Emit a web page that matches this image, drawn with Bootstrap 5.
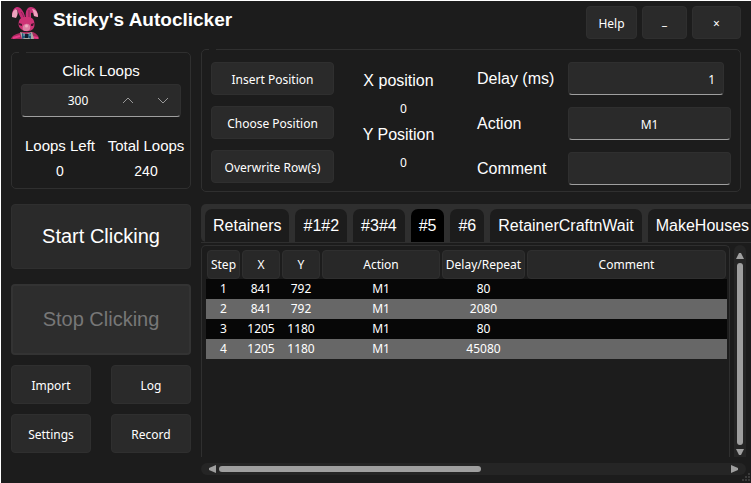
<!DOCTYPE html>
<html lang="en" data-bs-theme="dark">
<head>
<meta charset="utf-8">
<meta name="viewport" content="width=device-width, initial-scale=1">
<title>Sticky's Autoclicker</title>
<link href="https://cdn.jsdelivr.net/npm/bootstrap@5.3.0/dist/css/bootstrap.min.css" rel="stylesheet">
<style>
:root{--bg:#1c1c1c;--ctl:#2a2a2a;--line:#2f2f2f;--thumb:#9f9f9f}
body{background:var(--bg);color:#fff;font-family:"Liberation Sans",Arial,sans-serif;font-size:16px;line-height:20px;overflow:hidden}
.shell{border-top:1px solid #fff;border-left:1px solid #fff}
.topbar{height:48px;padding:5px 10px 0 10px}
.topbar h1{font-size:19px;line-height:28px;font-weight:700;padding-left:10px}
.window-btns{gap:5px}
.help{width:51px}.mini{width:45px}.shut{width:49px}
.workspace{display:grid;grid-template-columns:180px minmax(0,1fr);column-gap:10px;padding-left:10px}
.ctl,.ctl:hover,.ctl:disabled{background:var(--ctl);border:1px solid var(--line);border-radius:4px;color:#fff;font-family:"Noto Sans","Open Sans",sans-serif;font-size:12px;line-height:19px;padding:7px 4px 5px;min-width:0;height:33px}
.ctl.mini{font-weight:700;padding:4px 4px 8px}
.field,.field:hover{border-bottom-color:var(--thumb);box-shadow:none;outline:0}
.field-select{appearance:none;text-align:center;text-align-last:center}
.frame{position:relative;border:1px solid var(--line);border-radius:5px}
.frame::before{content:"";position:absolute;top:-1px;left:7px;width:7px;height:1px;background:var(--bg)}
.loops{margin-top:3px;padding:8px 9px 7px;font-size:15px}
.loops .num{font-size:14px;padding-top:5px}
.ctl.spin{display:flex;align-items:center;padding:0;margin-top:3px}
.spin input{flex:1 1 0;min-width:0;background:none;border:0;outline:0;color:#fff;text-align:center;padding:0 0 0 24px}
.spin button{background:none;border:0;width:35px;padding:0;line-height:1}
.loop-totals{padding-top:19px;margin-right:-6px}
.left-total{width:78px}.all-total{padding-left:6px;flex-grow:1}
.left-col{display:flex;flex-direction:column}
.ctl.big{font-family:"Liberation Sans",Arial,sans-serif;font-size:20px;margin-top:15px;padding:6px}
.ctl.go{height:65px}
.ctl.halt{height:71px;background:#2d2d2d;border:2px solid #333;color:#777}
.small-btns{display:grid;grid-template-columns:1fr 1fr;gap:10px 20px;margin-top:10px}
.small-btns .ctl{height:39px}
.editor{display:grid;grid-template-columns:123px 1fr 254px;margin-right:10px;padding:12px 9px 6px}
.stack{display:grid;grid-auto-rows:33px;row-gap:11px}
.coords{text-align:center;padding:8px 14px 0 0}
.coords .val{font-family:"Noto Sans","Open Sans",sans-serif;font-size:12px;line-height:16px;padding:9px 0 7px 10px}
.coords .cap{line-height:22px}
.form-rows{row-gap:12px}
.form-rows .line{display:grid;grid-template-columns:91px 1fr;align-items:center}
.form-rows .delay-in{margin-right:7px;text-align:right;padding-right:8px}
.tabs{background:var(--line);border-radius:5px 0 0 5px;height:38px;margin-top:12px;padding:5px 0 0 4px;gap:6px;overflow:hidden}
.tabs button{flex:none;background:var(--bg);border:0;border-radius:7px 7px 0 0;color:#fff;padding:0 8px;height:33px;line-height:32px}
.tabs button.on{background:#000}
.under{border-bottom:1px solid var(--line);margin-bottom:2px}
.grid-box{flex:1 1 0;min-width:0;border:1px solid var(--line);border-bottom:0;border-radius:5px 5px 0 0;padding:4px 2px 0 4px;height:212px;margin-right:4px}
.steps{width:100%;table-layout:fixed;border-collapse:collapse;font-family:"Noto Sans","Open Sans",sans-serif;font-size:12px;line-height:20px;text-align:center}
.steps th{padding:0 1px;font-weight:400}
.steps th span{display:block;height:29px;line-height:28px;background:#282828;border:1px solid var(--line);border-radius:4px;white-space:nowrap}
.steps td{padding:0;height:20px}
.steps tbody tr{background:#070707}
.steps tbody tr:nth-child(even){background:#676767}
.c-step{width:35px}.c-xy{width:40px}.c-act{width:120px}.c-rep{width:85px}
.track{background:#252525}
.thumb-v{width:6px;background:var(--thumb);border-radius:3px}
.thumb-h{height:6px;background:var(--thumb);border-radius:3px}
.track-v{width:12px;border-radius:6px 6px 0 0;padding:8px 0 2px;margin-right:5px}
.track-h{height:12px;border-radius:6px;margin:6px 5px 0 0;padding:0 8px}
.track-h .thumb-h{width:262px;margin-left:3px}
.grip{position:absolute;right:0;bottom:0}
</style>
<script src="https://cdn.jsdelivr.net/npm/bootstrap@5.3.0/dist/js/bootstrap.bundle.min.js"></script>
</head>
<body>
<div class="shell min-vh-100 position-relative">
  <header class="topbar d-flex align-items-start">
    <svg width="32" height="34" viewBox="0 0 32 34" aria-hidden="true">
      <path d="M12 15C8 9 8 4 5 3 3 5 3 9 2 11L1 11C1 6 2 2 6 1c4 0 7 5 8 10z" fill="#d0307f"/>
      <path d="M8 2c4 2 6 7 6 12l-3 0C8 9 7 6 6 3z" fill="#c52b74"/>
      <path d="M5 3C1 5 1 8 1 11l4 1C7 9 7 6 6 4z" fill="#eda3bd"/>
      <path d="M15 12C14 5 16 1 20 1c4 0 7 4 7 10l-4-1c-1-3-1-4-3-3l0 6z" fill="#c83278"/>
      <path d="M21 3c4 0 6 4 6 8l-4-1c0-3-1-5-2-7z" fill="#eda3bd"/>
      <path d="M10 6c2 2 3 5 3 7M18 4l0 8" stroke="#8b2457" fill="none"/>
      <path d="M9 13c3-3 10-3 13 0 2 3 2 8 0 10-3 3-9 3-12 0-3-2-3-7-1-10z" fill="#ce3376"/>
      <path d="M8 17l3 1v2l-3-1zM20 18l3-1-1 3-2 0z" fill="#46152d"/>
      <path d="M12 20c2-3 6-3 7 0 1 3-1 5-4 5s-4-2-3-5z" fill="#dc7fa4"/>
      <circle cx="15.500" cy="20" r="1.500" fill="#efadc0"/>
      <path d="M0 33c1-4 6-5 11-7l11 0c4 2 6 4 6 7z" fill="#a92b5f"/>
      <path d="M2 32l7-2M21 31l6 1" stroke="#e83b8a" stroke-width="2"/>
      <path d="M9 26l6 2 6-2 2 7H11z" fill="#a9aaa1"/>
      <path d="M11 27l4 2 5-2 0 6-4-2-5 2z" fill="#24597b"/>
      <path d="M14 28h3v4h-3z" fill="#111e2d"/><path d="M12 29h2M18 29h2" stroke="#86b4bf"/>
    </svg>
    <h1 class="m-0 flex-grow-1">Sticky's Autoclicker</h1>
    <div class="d-flex window-btns">
      <button class="ctl help" type="button">Help</button>
      <button class="ctl mini" type="button" aria-label="Minimize">_</button>
      <button class="ctl shut" type="button" aria-label="Close">×</button>
    </div>
  </header>
  <main class="workspace">
    <section class="left-col">
      <div class="frame loops">
        <label class="d-block text-center" for="loops">Click Loops</label>
        <div class="ctl field spin">
          <input id="loops" type="text" value="300">
          <button type="button" aria-label="More loops"><svg width="12" height="8" viewBox="0 0 12 8" fill="none" stroke="#999"><path d="M1 6l5-5 5 5"/></svg></button>
          <button type="button" aria-label="Fewer loops"><svg width="12" height="8" viewBox="0 0 12 8" fill="none" stroke="#999"><path d="M1 1l5 5 5-5"/></svg></button>
        </div>
        <div class="d-flex text-center text-nowrap loop-totals">
          <div class="left-total"><div>Loops Left</div><div class="num">0</div></div>
          <div class="all-total"><div>Total Loops</div><div class="num">240</div></div>
        </div>
      </div>
      <button class="ctl big go" type="button">Start Clicking</button>
      <button class="ctl big halt" type="button" disabled>Stop Clicking</button>
      <div class="small-btns">
        <button class="ctl" type="button">Import</button><button class="ctl" type="button">Log</button>
        <button class="ctl" type="button">Settings</button><button class="ctl" type="button">Record</button>
      </div>
    </section>
    <section>
      <div class="frame editor">
        <div class="stack align-content-start">
          <button class="ctl" type="button">Insert Position</button>
          <button class="ctl" type="button">Choose Position</button>
          <button class="ctl" type="button">Overwrite Row(s)</button>
        </div>
        <div class="coords">
          <div class="cap">X position</div><div class="val">0</div>
          <div class="cap">Y Position</div><div class="val">0</div>
        </div>
        <div class="stack form-rows">
          <div class="line"><label for="delay">Delay (ms)</label><input class="ctl field delay-in" id="delay" type="text" value="1"></div>
          <div class="line"><label for="action">Action</label><select class="ctl field field-select" id="action"><option>M1</option></select></div>
          <div class="line"><label for="comment">Comment</label><input class="ctl field" id="comment" type="text"></div>
        </div>
      </div>
      <nav class="tabs d-flex" role="tablist">
        <button type="button" role="tab">Retainers</button><button type="button" role="tab">#1#2</button><button type="button" role="tab">#3#4</button><button type="button" role="tab" class="on" aria-selected="true">#5</button><button type="button" role="tab">#6</button><button type="button" role="tab">RetainerCraftnWait</button><button type="button" role="tab">MakeHouses</button>
      </nav>
      <div class="under"></div>
      <div class="d-flex">
        <div class="grid-box">
          <table class="steps">
            <colgroup><col class="c-step"><col class="c-xy"><col class="c-xy"><col class="c-act"><col class="c-rep"><col></colgroup>
            <thead><tr><th><span>Step</span></th><th><span>X</span></th><th><span>Y</span></th><th><span>Action</span></th><th><span>Delay/Repeat</span></th><th><span>Comment</span></th></tr></thead>
            <tbody>
              <tr><td>1</td><td>841</td><td>792</td><td>M1</td><td>80</td><td></td></tr>
              <tr><td>2</td><td>841</td><td>792</td><td>M1</td><td>2080</td><td></td></tr>
              <tr><td>3</td><td>1205</td><td>1180</td><td>M1</td><td>80</td><td></td></tr>
              <tr><td>4</td><td>1205</td><td>1180</td><td>M1</td><td>45080</td><td></td></tr>
            </tbody>
          </table>
        </div>
        <div class="track track-v d-flex flex-column align-items-center gap-1">
          <svg width="8" height="6"><path d="M0 6L3 0h2l3 6z" fill="#9f9f9f"/></svg>
          <div class="thumb-v flex-grow-1"></div>
          <svg width="8" height="6"><path d="M0 0h8L5 6H3z" fill="#9f9f9f"/></svg>
        </div>
      </div>
      <div class="track track-h d-flex align-items-center">
        <svg width="7" height="8"><path d="M7 0v8L0 5V3z" fill="#9f9f9f"/></svg>
        <div class="thumb-h"></div>
        <svg class="ms-auto" width="7" height="8"><path d="M0 0v8l7-3V3z" fill="#9f9f9f"/></svg>
      </div>
    </section>
  </main>
  <svg class="grip" width="10" height="10" fill="#3a3a3a" aria-hidden="true"><path d="M7 0h2v2H7zM4 3h2v2H4zM7 3h2v2H7zM1 6h2v2H1zM4 6h2v2H4zM7 6h2v2H7z"/></svg>
</div>
</body>
</html>
